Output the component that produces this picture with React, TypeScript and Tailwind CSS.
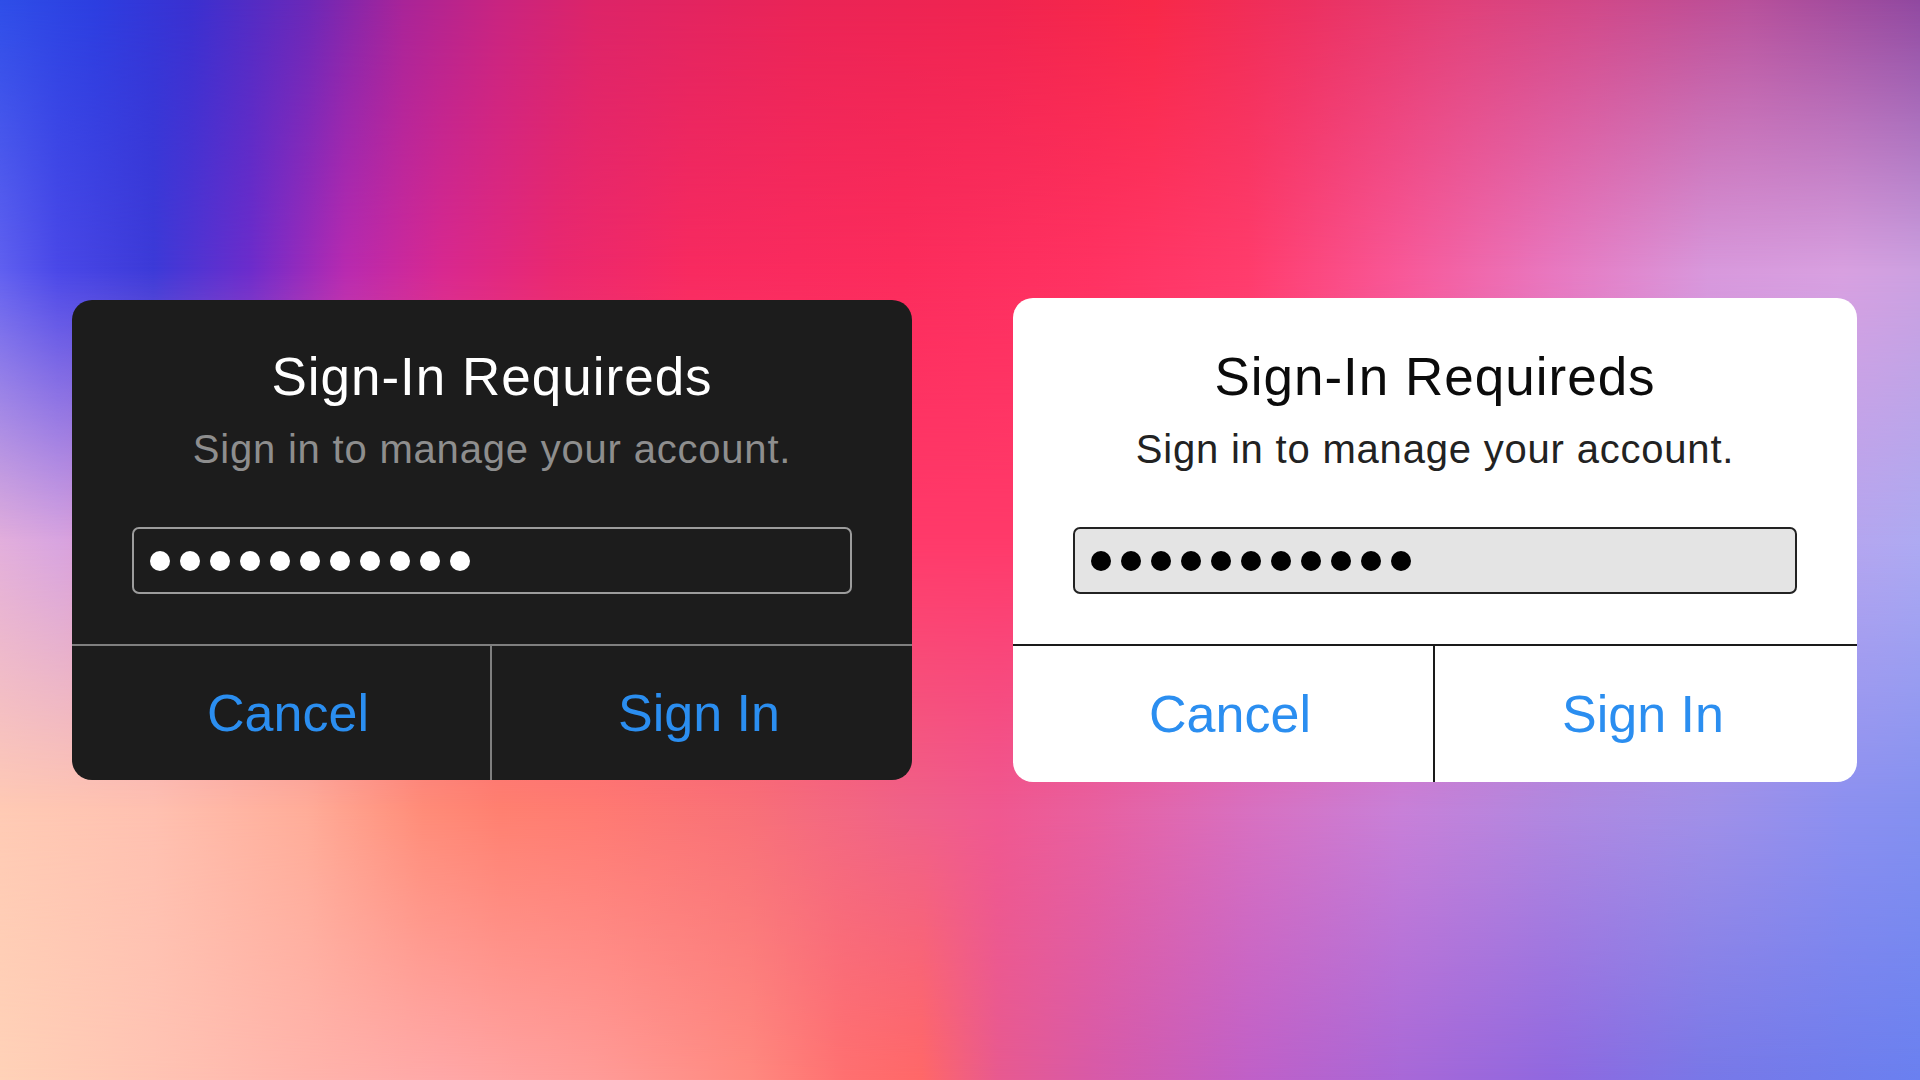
import React from "react";

type Theme = "dark" | "light";

const themes: Record<
  Theme,
  {
    card: string;
    title: string;
    subtitle: string;
    field: string;
    dot: string;
    line: string;
  }
> = {
  dark: {
    card: "w-[840px] h-[480px] bg-[#1c1c1c] pt-[50px]",
    title: "text-white",
    subtitle: "text-[#8e8e8e]",
    field: "border-[#9c9c9c] bg-[#1c1c1c]",
    dot: "bg-white",
    line: "border-[#7f7f7f]",
  },
  light: {
    card: "w-[844px] h-[484px] bg-white pt-[52px]",
    title: "text-[#0b0b0b]",
    subtitle: "text-[#222222]",
    field: "border-[#222222] bg-[#e4e4e4]",
    dot: "bg-black",
    line: "border-[#1a1a1a]",
  },
};

function SignInDialog({ theme }: { theme: Theme }) {
  const t = themes[theme];

  return (
    <div className={`flex flex-col overflow-hidden rounded-[20px] ${t.card}`}>
      <h2 className={`text-center text-[53px] leading-none tracking-[1px] ${t.title}`}>
        Sign-In Requireds
      </h2>
      <p className={`mt-[26px] text-center text-[40px] leading-none tracking-[0.8px] ${t.subtitle}`}>
        Sign in to manage your account.
      </p>

      {/* masked password field */}
      <div
        className={`mx-[60px] mt-[58px] flex h-[67px] items-center gap-[10px] rounded-[7px] border-2 pl-[16px] ${t.field}`}
      >
        {Array.from({ length: 11 }).map((_, i) => (
          <span key={i} className={`size-[20px] rounded-full ${t.dot}`} />
        ))}
      </div>

      <div className={`mt-[50px] grid flex-1 grid-cols-2 border-t-2 ${t.line}`}>
        <button className={`flex items-center justify-center border-r-2 pl-[14px] text-[52px] leading-none text-[#2b8ef0] ${t.line}`}>
          Cancel
        </button>
        <button className="flex items-center justify-center pr-[6px] text-[52px] leading-none text-[#2b8ef0]">
          Sign In
        </button>
      </div>
    </div>
  );
}

export default function App() {
  return (
    <div className="relative h-screen w-full overflow-hidden [font-family:'Liberation_Sans',Arial,sans-serif]">
      {/* backdrop: five horizontal colour rows blended top to bottom */}
      <div className="absolute inset-0 bg-[linear-gradient(90deg,#ffd2b8_0%,#ffc4b4_8%,#ffb4ac_16%,#ffa8a8_23%,#ff9c98_31%,#ff8a80_39%,#ff7070_44%,#ff6868_48%,#e85a90_52%,#d85aa8_57%,#c060c8_65%,#a868d8_73%,#9068e0_81%,#7878e8_89%,#6a80f0_100%)]" />
      <div className="absolute inset-0 bg-[linear-gradient(90deg,#ffcab4_0%,#ffc0b0_8%,#ffac98_16%,#ff8c78_22%,#ff8070_26%,#ff7a72_31%,#f87078_39%,#f06288_47%,#f05890_52%,#e860a0_57%,#d870c0_65%,#c880d8_73%,#b088e0_81%,#a090e8_89%,#8c90f0_96%,#8490f0_100%)] [mask-image:linear-gradient(to_bottom,black_75%,transparent_100%)]" />
      <div className="absolute inset-0 bg-[linear-gradient(90deg,#e2aedc_0%,#d8a4e0_3%,#e080b8_12%,#f05080_25%,#ff3a6a_45%,#ff3a6a_55%,#f85090_68%,#e070b8_78%,#c898e4_88%,#b8a4ee_95%,#aeaaf2_100%)] [mask-image:linear-gradient(to_bottom,black_50%,transparent_75%)]" />
      <div className="absolute inset-0 bg-[linear-gradient(90deg,#6060f0_0%,#4a48e8_3%,#3c3ad8_8%,#6c2ccc_13%,#b82ab0_18%,#d82890_23%,#ea2870_29%,#f82a60_36%,#fc2c5c_47%,#ff3262_57%,#ff3c6c_65%,#f85898_73%,#e878c0_81%,#d898dc_89%,#d8a0e0_96%,#cca0e0_100%)] [mask-image:linear-gradient(to_bottom,black_25%,transparent_50%)]" />
      <div className="absolute inset-0 bg-[linear-gradient(90deg,#2e4ee8_0%,#2c3ee0_5%,#3a30d0_10%,#6a28b8_16%,#a82498_21%,#c82480_26%,#dc2468_31%,#ea2456_42%,#f02450_52%,#f82848_60%,#ec3060_68%,#e04078_76%,#d04888_83%,#b8509a_91%,#9048a0_100%)] [mask-image:linear-gradient(to_bottom,black_0%,transparent_25%)]" />

      <div className="relative flex h-full items-center gap-[101px] pl-[72px]">
        <SignInDialog theme="dark" />
        <SignInDialog theme="light" />
      </div>
    </div>
  );
}
